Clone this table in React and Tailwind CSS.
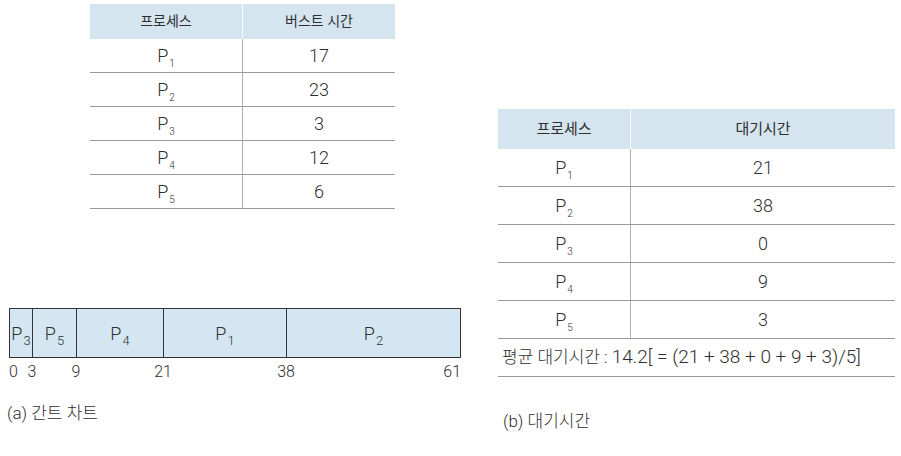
import React from "react";

const font = "font-['Roboto','Noto_Sans_CJK_KR',sans-serif]";

const burst = [
  { p: "1", v: "17" },
  { p: "2", v: "23" },
  { p: "3", v: "3" },
  { p: "4", v: "12" },
  { p: "5", v: "6" },
];

const waiting = [
  { p: "1", v: "21" },
  { p: "2", v: "38" },
  { p: "3", v: "0" },
  { p: "4", v: "9" },
  { p: "5", v: "3" },
];

const gantt = [
  { p: "3", w: "w-[23px]" },
  { p: "5", w: "w-[44px]" },
  { p: "4", w: "w-[87px]" },
  { p: "1", w: "w-[123px]" },
  { p: "2", w: "flex-1" },
];

// process label like P₁
const Proc = ({ n, sub = "text-[10px]" }) => (
  <span>
    P<span className={`${sub} relative top-[5px] ml-[1px]`}>{n}</span>
  </span>
);

const App = () => {
  return (
    <div className={`w-[901px] h-[456px] bg-white text-[#2f2f2f] font-light ${font} flex`}>
      {/* left side */}
      <div className="w-[480px] flex flex-col">
        <div className="ml-[90px] mt-[4px] w-[305px]">
          <div className="flex h-[35px] bg-[#d4e5ef] text-[14px] font-normal">
            <div className="w-[153px] flex items-center justify-center border-r border-white">프로세스</div>
            <div className="flex-1 flex items-center justify-center">버스트 시간</div>
          </div>
          {burst.map((r) => (
            <div key={r.p} className="flex h-[34px] border-b border-[#9a9a9a] text-[18px]">
              <div className="w-[153px] flex items-center justify-center border-r border-[#b0b0b0]">
                <Proc n={r.p} />
              </div>
              <div className="flex-1 flex items-center justify-center">{r.v}</div>
            </div>
          ))}
        </div>

        <div className="ml-[9px] mt-[99px] w-[452px]">
          <div className="flex h-[50px] border-[1.5px] border-[#333] bg-[#d4e6f1] text-[18px]">
            {gantt.map((g, i) => (
              <div
                key={g.p}
                className={`${g.w} flex items-center justify-center ${i < 4 ? "border-r-[1.5px] border-[#333]" : ""}`}
              >
                <Proc n={g.p} sub="text-[13px]" />
              </div>
            ))}
          </div>
          <div className="relative h-[24px] text-[16px]">
            <span className="absolute left-0 top-[2px]">0</span>
            <span className="absolute left-[23px] top-[2px] -translate-x-1/2">3</span>
            <span className="absolute left-[67px] top-[2px] -translate-x-1/2">9</span>
            <span className="absolute left-[154px] top-[2px] -translate-x-1/2">21</span>
            <span className="absolute left-[277px] top-[2px] -translate-x-1/2">38</span>
            <span className="absolute right-0 top-[2px]">61</span>
          </div>
        </div>

        <div className="ml-[7px] mt-[19px] text-[17px]">(a) 간트 차트</div>
      </div>

      {/* right side */}
      <div className="flex flex-col">
        <div className="ml-[18px] mt-[109px] w-[397px]">
          <div className="flex h-[40px] bg-[#d4e5ef] text-[15px] font-normal">
            <div className="w-[133px] flex items-center justify-center border-r border-white">프로세스</div>
            <div className="flex-1 flex items-center justify-center">대기시간</div>
          </div>
          {waiting.map((r) => (
            <div key={r.p} className="flex h-[38px] border-b border-[#9a9a9a] text-[18px]">
              <div className="w-[133px] flex items-center justify-center border-r border-[#b0b0b0]">
                <Proc n={r.p} />
              </div>
              <div className="flex-1 flex items-center justify-center">{r.v}</div>
            </div>
          ))}
          <div className="h-[38px] border-b border-[#9a9a9a] flex items-center pl-[4px] text-[17px]">
            <span>평균 대기시간 :</span>
            <span className="ml-[4px] text-[19px]">14.2[ = (21 + 38 + 0 + 9 + 3)/5]</span>
          </div>
        </div>
        <div className="ml-[23px] mt-[32px] text-[17px]">(b) 대기시간</div>
      </div>
    </div>
  );
};

export default App;
